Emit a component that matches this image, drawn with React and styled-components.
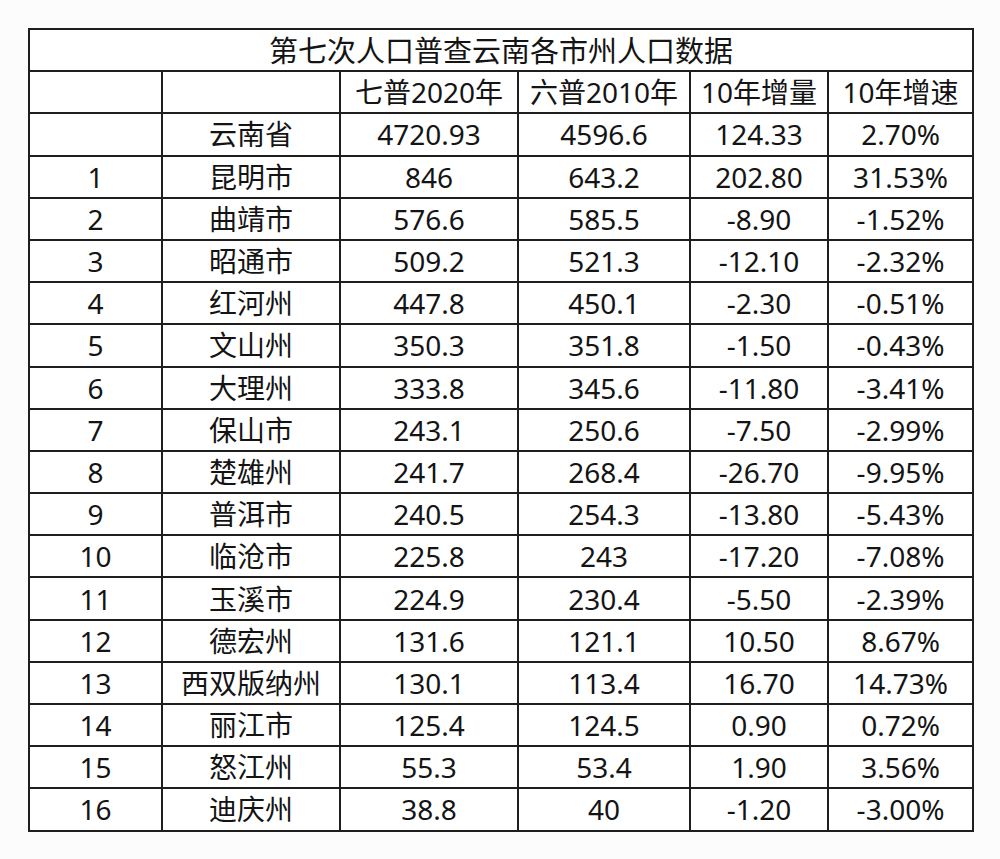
import React from 'react';
import styled, { createGlobalStyle } from 'styled-components';

const rows = [
  ['', '云南省', '4720.93', '4596.6', '124.33', '2.70%'],
  ['1', '昆明市', '846', '643.2', '202.80', '31.53%'],
  ['2', '曲靖市', '576.6', '585.5', '-8.90', '-1.52%'],
  ['3', '昭通市', '509.2', '521.3', '-12.10', '-2.32%'],
  ['4', '红河州', '447.8', '450.1', '-2.30', '-0.51%'],
  ['5', '文山州', '350.3', '351.8', '-1.50', '-0.43%'],
  ['6', '大理州', '333.8', '345.6', '-11.80', '-3.41%'],
  ['7', '保山市', '243.1', '250.6', '-7.50', '-2.99%'],
  ['8', '楚雄州', '241.7', '268.4', '-26.70', '-9.95%'],
  ['9', '普洱市', '240.5', '254.3', '-13.80', '-5.43%'],
  ['10', '临沧市', '225.8', '243', '-17.20', '-7.08%'],
  ['11', '玉溪市', '224.9', '230.4', '-5.50', '-2.39%'],
  ['12', '德宏州', '131.6', '121.1', '10.50', '8.67%'],
  ['13', '西双版纳州', '130.1', '113.4', '16.70', '14.73%'],
  ['14', '丽江市', '125.4', '124.5', '0.90', '0.72%'],
  ['15', '怒江州', '55.3', '53.4', '1.90', '3.56%'],
  ['16', '迪庆州', '38.8', '40', '-1.20', '-3.00%'],
];

const widths = [133, 178, 178, 172, 138, 145];

const GlobalStyle = createGlobalStyle`
  body {
    margin: 0;
    background: #fcfcfc;
    font-family: "Noto Sans", "Noto Sans CJK SC", sans-serif;
    color: #141414;
  }
`;

const Page = styled.div`
  padding: 28px 0 0 28px;
  width: 1000px;
  height: 859px;
  box-sizing: border-box;
`;

const Table = styled.table`
  border-collapse: collapse;
  table-layout: fixed;
  width: 944px;
  background: #fff;
`;

const Row = styled.tr`
  height: 42.2px;
`;

const Cell = styled.td`
  border: 2px solid #1e1e1e;
  padding: 0;
  text-align: center;
  vertical-align: middle;
  font-size: ${p => (p.$title ? '29px' : '28px')};
  line-height: 1;
  white-space: nowrap;
  overflow: hidden;
`;

export default function App() {
  return (
    <>
      <GlobalStyle />
      <Page>
        <Table>
          <colgroup>
            {widths.map((w, i) => (
              <col key={i} style={{ width: w }} />
            ))}
          </colgroup>
          <tbody>
            <Row>
              <Cell $title colSpan={6}>第七次人口普查云南各市州人口数据</Cell>
            </Row>
            <Row>
              <Cell />
              <Cell />
              <Cell>七普2020年</Cell>
              <Cell>六普2010年</Cell>
              <Cell>10年增量</Cell>
              <Cell>10年增速</Cell>
            </Row>
            {rows.map((r, i) => (
              <Row key={i}>
                {r.map((v, j) => (
                  <Cell key={j}>{v}</Cell>
                ))}
              </Row>
            ))}
          </tbody>
        </Table>
      </Page>
    </>
  );
}
